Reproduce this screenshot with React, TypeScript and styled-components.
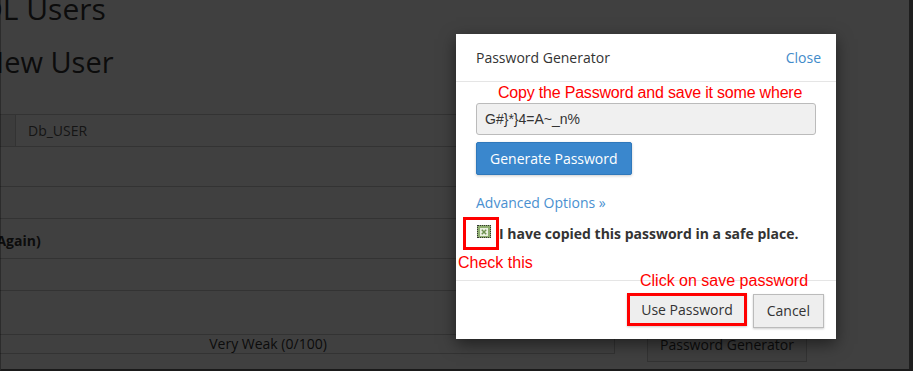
import styled, { createGlobalStyle } from 'styled-components';

const GlobalStyle = createGlobalStyle`
  html, body {
    margin: 0;
    padding: 0;
    background: #fff;
  }
  body {
    width: 913px;
    height: 371px;
    overflow: hidden;
    font-family: "Open Sans", sans-serif;
  }
`;

const Page = styled.div`
  position: relative;
  width: 913px;
  height: 371px;
  overflow: hidden;
  background: #fff;
  color: #333;
`;

const Content = styled.div`
  display: flex;
  flex-direction: column;
  margin-left: -79px;
  width: 900px;
`;

const Heading = styled.h1`
  margin: -11px 0 0 0;
  font-size: 30px;
  font-weight: 400;
  line-height: 40px;
  color: #333;
`;

const SubHeading = styled.h2`
  margin: 13px 0 0 0;
  font-size: 29px;
  font-weight: 400;
  line-height: 40px;
  color: #333;
`;

const Form = styled.div`
  display: flex;
  flex-direction: column;
  margin-top: 32px;
  width: 707px;
`;

const InputGroup = styled.div`
  display: flex;
  height: 33px;
  border: 1px solid #ccc;
  box-sizing: border-box;
`;

const Addon = styled.div`
  width: 93px;
  border-right: 1px solid #ccc;
  background: #eee;
`;

const InputText = styled.div`
  padding-left: 12px;
  font-size: 14px;
  line-height: 31px;
  color: #555;
`;

const Label = styled.div<{ $h: number }>`
  height: ${p => p.$h}px;
  display: flex;
  align-items: center;
  padding-top: 3px;
  box-sizing: border-box;
  font-size: 14px;
  font-weight: 700;
`;

const Field = styled.div`
  height: 33px;
  border: 1px solid #ccc;
  box-sizing: border-box;
`;

const MeterRow = styled.div`
  display: flex;
  align-items: flex-start;
  gap: 32px;
  margin-top: 43px;
`;

const Meter = styled.div`
  flex: none;
  width: 694px;
  height: 20px;
  border: 1px solid #ccc;
  box-sizing: border-box;
  text-align: center;
  font-size: 14px;
  line-height: 18px;
  color: #333;
`;

const GhostButton = styled.div`
  flex: none;
  width: 160px;
  height: 34px;
  margin-top: -6px;
  border: 1px solid #ccc;
  background: #f5f5f5;
  box-sizing: border-box;
  font-size: 14px;
  text-align: center;
  line-height: 32px;
  color: #333;
`;

const Backdrop = styled.div`
  position: absolute;
  inset: 0;
  background: rgba(0, 0, 0, 0.75);
  border-left: 1px solid rgba(0, 0, 0, 0.3);
  border-right: 4px solid #1e1e1e;
  border-bottom: 2px solid #1a1a1a;
`;

const Modal = styled.div`
  position: absolute;
  left: 456px;
  top: 34px;
  width: 380px;
  height: 305px;
  background: #fff;
  box-shadow: 0 5px 15px rgba(0, 0, 0, 0.5);
  display: flex;
  flex-direction: column;
`;

const ModalHeader = styled.div`
  display: flex;
  align-items: center;
  justify-content: space-between;
  height: 48px;
  padding: 0 15px 0 20px;
  border-bottom: 1px solid #e5e5e5;
  box-sizing: border-box;
`;

const ModalTitle = styled.div`
  font-size: 14px;
  color: #333;
`;

const CloseLink = styled.div`
  font-size: 14px;
  color: #428bca;
`;

const ModalBody = styled.div`
  position: relative;
  flex: 1;
  display: flex;
  flex-direction: column;
  padding: 21px 20px 0 20px;
`;

const PasswordInput = styled.div`
  height: 32px;
  box-sizing: border-box;
  border: 1px solid #bbb;
  border-radius: 3px;
  background: #f0f0f0;
  padding-left: 8px;
  font-family: "Liberation Sans", Arial, sans-serif;
  font-size: 14px;
  line-height: 30px;
  color: #333;
`;

const PrimaryButton = styled.div`
  align-self: flex-start;
  margin-top: 7px;
  height: 33px;
  padding: 0 13px;
  box-sizing: border-box;
  background: #3a87cd;
  border: 1px solid #2f78bb;
  border-radius: 2px;
  box-shadow: 0 1px 3px rgba(0, 0, 0, 0.2);
  color: #fff;
  font-size: 14px;
  line-height: 31px;
`;

const AdvancedLink = styled.div`
  margin-top: 18px;
  font-size: 14px;
  color: #4a90d0;
  line-height: 20px;
`;

const CheckRow = styled.div`
  display: flex;
  align-items: center;
  gap: 8px;
  margin-top: 11px;
  padding-left: 1px;
`;

const CheckBox = styled.div`
  width: 12px;
  height: 11px;
  margin-top: -5px;
  background: #8eae70;
  border: 1px dotted #333;
  display: flex;
  align-items: center;
  justify-content: center;
  flex: none;
`;

const CheckText = styled.div`
  font-size: 14px;
  font-weight: 700;
  color: #333;
  line-height: 20px;
`;

const ModalFooter = styled.div`
  position: relative;
  display: flex;
  justify-content: flex-end;
  align-items: center;
  gap: 6px;
  height: 59px;
  padding: 0 12px 0 0;
  border-top: 1px solid #e5e5e5;
  box-sizing: border-box;
`;

const FooterButton = styled.div<{ $marked?: boolean }>`
  height: ${p => (p.$marked ? 33 : 34)}px;
  box-sizing: border-box;
  padding: 0 ${p => (p.$marked ? 11 : 13)}px;
  background: #eee;
  border: ${p => (p.$marked ? '3px solid #f00' : '1px solid #bbb')};
  box-shadow: 0 1px 2px rgba(0, 0, 0, 0.2);
  font-size: 14px;
  color: #333;
  line-height: ${p => (p.$marked ? 27 : 32)}px;
  margin-top: ${p => (p.$marked ? -2 : 1)}px;
`;

const Note = styled.div<{ $tight?: boolean }>`
  position: absolute;
  font-family: "Liberation Sans", Arial, sans-serif;
  font-size: 16px;
  color: #f00;
  white-space: nowrap;
  line-height: 18px;
  letter-spacing: ${p => (p.$tight ? '-0.2px' : '0')};
`;

const RedFrame = styled.div`
  position: absolute;
  left: 7px;
  top: 135px;
  width: 36px;
  height: 33px;
  box-sizing: border-box;
  border: 3px solid #f00;
`;

const CheckMark = () => (
  <svg width="8" height="8" viewBox="0 0 8 8">
    <rect x="0" y="0" width="8" height="8" fill="#e9f0e0" />
    <path d="M1.8 1.8 L6.2 6.2 M6.2 1.8 L1.8 6.2" stroke="#6d9150" strokeWidth="1.5" />
  </svg>
);

export default function App() {
  return (
    <Page>
      <GlobalStyle />
      <Content>
        <Heading>MySQL Users</Heading>
        <SubHeading>Add New User</SubHeading>
        <Form>
          <InputGroup>
            <Addon />
            <InputText>Db_USER</InputText>
          </InputGroup>
          <Label $h={39}>Password</Label>
          <Field />
          <Label $h={39}>Password (Again)</Label>
          <Field />
          <MeterRow>
            <Meter>Very Weak (0/100)</Meter>
            <GhostButton>Password Generator</GhostButton>
          </MeterRow>
        </Form>
      </Content>
      <Backdrop />
      <Modal>
        <ModalHeader>
          <ModalTitle>Password Generator</ModalTitle>
          <CloseLink>Close</CloseLink>
        </ModalHeader>
        <ModalBody>
          <PasswordInput>G#{'}'}*{'}'}4=A~_n%</PasswordInput>
          <PrimaryButton>Generate Password</PrimaryButton>
          <AdvancedLink>Advanced Options »</AdvancedLink>
          <CheckRow>
            <CheckBox>
              <CheckMark />
            </CheckBox>
            <CheckText>I have copied this password in a safe place.</CheckText>
          </CheckRow>
          <Note $tight style={{ left: 42, top: 2 }}>Copy the Password and save it some where</Note>
          <RedFrame />
          <Note style={{ left: 2, top: 172 }}>Check this</Note>
        </ModalBody>
        <ModalFooter>
          <Note style={{ left: 184, top: -9 }}>Click on save password</Note>
          <FooterButton $marked>Use Password</FooterButton>
          <FooterButton>Cancel</FooterButton>
        </ModalFooter>
      </Modal>
    </Page>
  );
}
